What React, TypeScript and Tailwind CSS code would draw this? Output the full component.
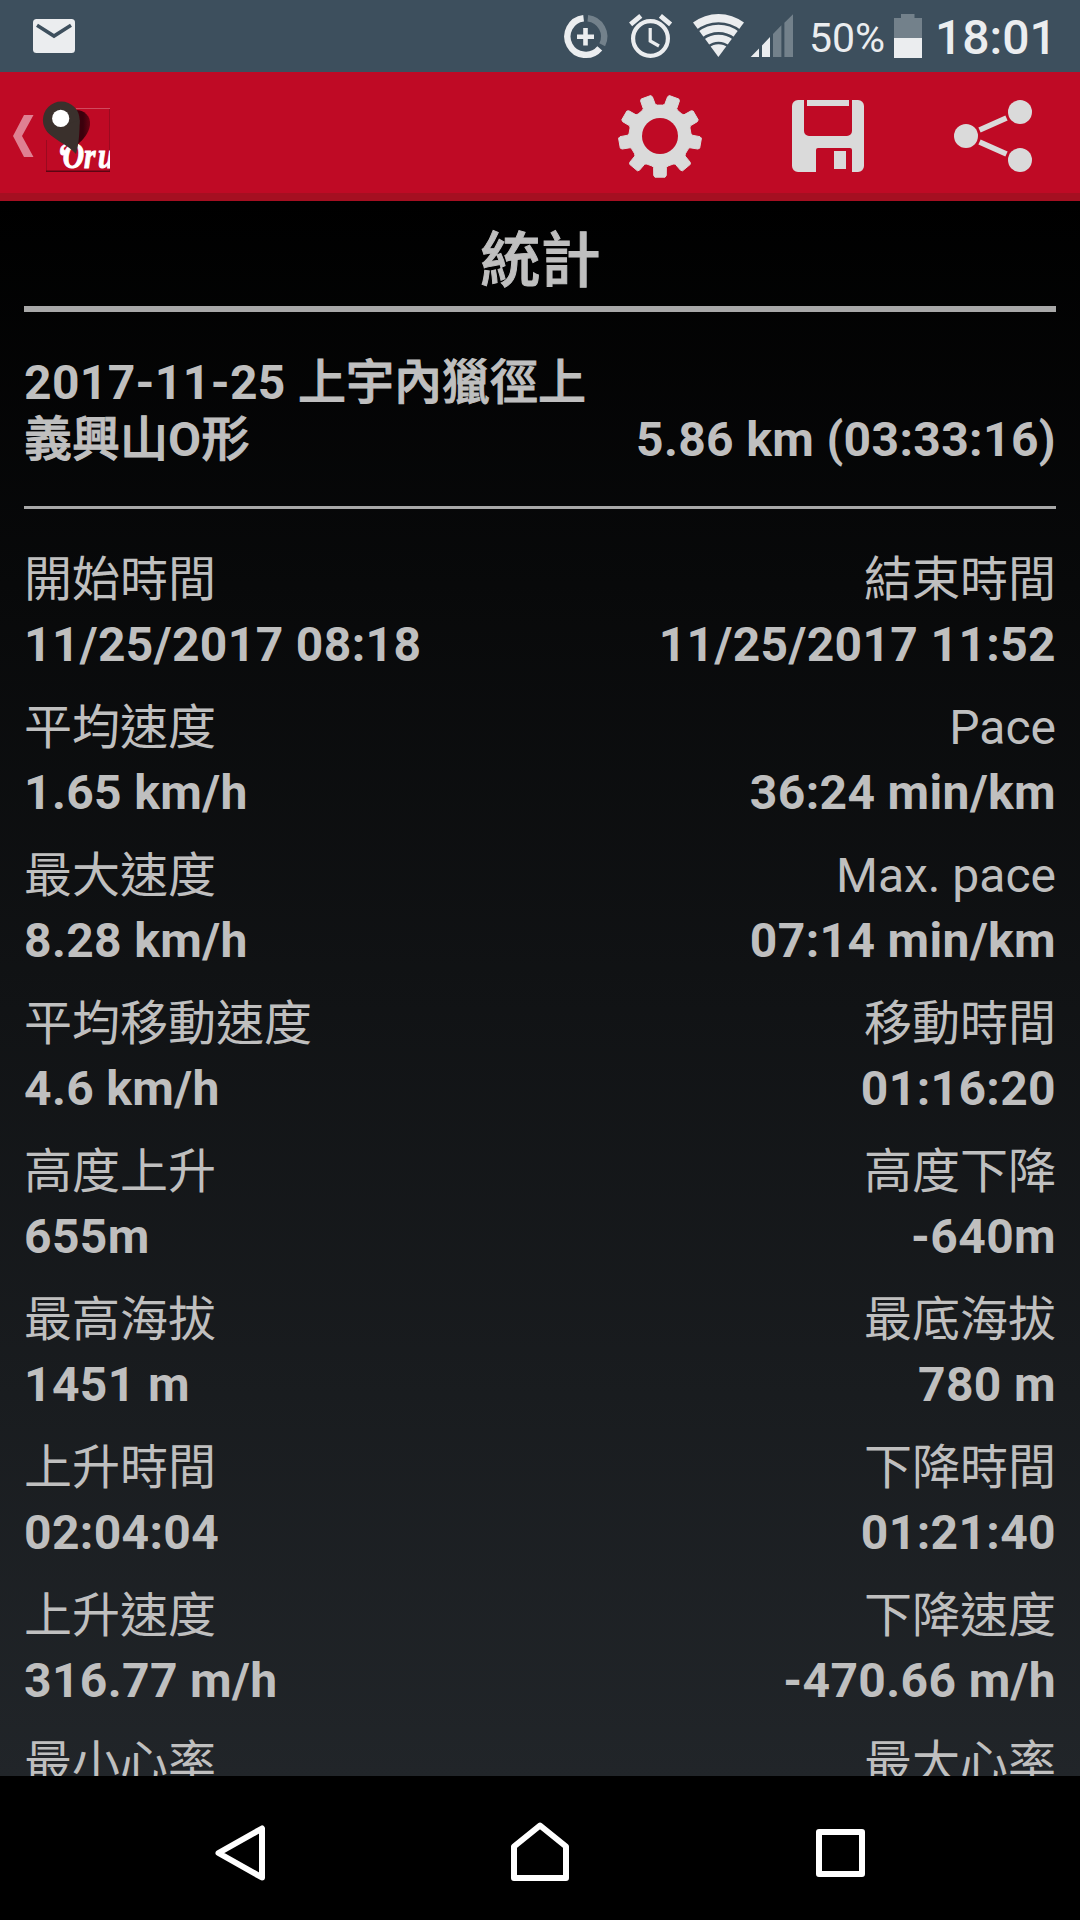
const summary = {
  date: "2017-11-25",
  name: ["上宇內獵徑上", "義興山", "形"],
  total: "5.86 km (03:33:16)",
};

const stats = [
  { left: ["開始時間", "11/25/2017 08:18"], right: ["結束時間", "11/25/2017 11:52"] },
  { left: ["平均速度", "1.65 km/h"], right: ["Pace", "36:24 min/km"] },
  { left: ["最大速度", "8.28 km/h"], right: ["Max. pace", "07:14 min/km"] },
  { left: ["平均移動速度", "4.6 km/h"], right: ["移動時間", "01:16:20"] },
  { left: ["高度上升", "655m"], right: ["高度下降", "-640m"] },
  { left: ["最高海拔", "1451 m"], right: ["最底海拔", "780 m"] },
  { left: ["上升時間", "02:04:04"], right: ["下降時間", "01:21:40"] },
  { left: ["上升速度", "316.77 m/h"], right: ["下降速度", "-470.66 m/h"] },
  { left: ["最小心率", ""], right: ["最大心率", ""] },
];

function MailIcon() {
  return (
    <svg width="42" height="34" viewBox="0 0 42 34" className="ml-[33px] shrink-0">
      <rect width="42" height="34" rx="3.5" fill="#ebedef" />
      <path d="M4 6.2 21 17l17-10.8" fill="none" stroke="#3d4f5d" strokeWidth="3.6" />
    </svg>
  );
}

/* Data saver, alarm, wifi and signal strength */
function StatusIcons() {
  return (
    <svg width="232" height="72" viewBox="563 0 232 72" className="shrink-0">
      <g fill="none" strokeWidth="6.4">
        <path d="M583.6 18.2a18.4 18.4 0 1 0 16.2 30.2" stroke="#ebedef" />
        <path d="M587.8 18.2a18.4 18.4 0 0 1 14.4 26.6" stroke="#73818b" />
        <path d="M585.5 28v17.4M577 36.7h17" stroke="#ebedef" strokeWidth="4.6" />
      </g>
      <g fill="none" stroke="#ebedef">
        <circle cx="650.5" cy="38.5" r="17.4" strokeWidth="4.2" />
        <path d="M650.2 28v13l8.8 5" strokeWidth="3.2" />
        <path d="M630.6 24.4l10.2-8.6M670.6 24.4l-10.2-8.6" strokeWidth="4.8" />
      </g>
      {/* wifi: a wedge cut into bands by three thin arcs */}
      <path d="M693 22.6a42.5 42.5 0 0 1 51 0L718.4 57z" fill="#ebedef" />
      <g fill="none" stroke="#3d4f5d" strokeWidth="2.6">
        <path d="M697 31a34.5 34.5 0 0 1 43 0" />
        <path d="M703 38.6a25.5 25.5 0 0 1 31 0" />
        <path d="M708.5 46.6a15.8 15.8 0 0 1 20 0" />
      </g>
      <path d="M750.7 57 759 48.4V57zM762 45.4l8-8.4v20h-8z" fill="#ebedef" />
      <path d="M773 34l8.4-8.8V57H773zM784.4 22.8l8.6-8.6V57h-8.6z" fill="#73818b" />
    </svg>
  );
}

function BatteryIcon() {
  return (
    <svg width="28" height="44" viewBox="0 0 28 44" className="ml-[9px] shrink-0">
      <path d="M7 0h13.5v4H28v20H0V4h7z" fill="#73818b" />
      <path d="M0 24h28v20H0z" fill="#ebedef" />
    </svg>
  );
}

function BackChevron() {
  return (
    <svg width="21" height="42" viewBox="0 0 21 42" className="ml-[13px] shrink-0">
      <path d="M11 0h9.5L9 21l11.5 21H11L0 21z" fill="#df8092" />
    </svg>
  );
}

function AppLogo() {
  return (
    <svg width="70" height="74" viewBox="42 99 70 74" className="ml-[8px] shrink-0">
      <defs>
        <clipPath id="tile">
          <rect x="46" y="108" width="64" height="64" />
        </clipPath>
        <linearGradient id="pinShadow" x1="0" x2="1">
          <stop offset="0.5" stopColor="#3c000c" />
          <stop offset="1" stopColor="#6a0313" />
        </linearGradient>
      </defs>
      <rect x="46" y="108" width="64" height="64" fill="#bf0a25" />
      <path d="M76 108.5h34" stroke="#d04a5e" strokeWidth="1" />
      <path d="M46.5 140v32M109.5 109v63" stroke="#9b0a20" strokeWidth="1" />
      <path d="M46 171.3h64" stroke="#5c0512" strokeWidth="1.5" />
      <path d="M76 110c8 0 15 6 14 15-1 8-7 15-12 19z" fill="url(#pinShadow)" />
      <g clipPath="url(#tile)">
        <text
          transform="translate(57 168) scale(0.82 1)"
          x="0 7 33 50"
          fill="white"
          stroke="white"
          strokeWidth="1"
          fontFamily="Liberation Serif, serif"
          fontSize="36"
          fontStyle="italic"
          fontWeight="700"
        >
          ‘Oru
        </text>
      </g>
      <circle cx="61.3" cy="120" r="18.4" fill="#3a302c" />
      <path d="M46.4 130.8C54 140 68 145 76 154c3-9 3.700-24 3.700-34z" fill="#3a302c" />
      <circle cx="60.7" cy="118.4" r="8.6" fill="white" />
    </svg>
  );
}

const TEETH = 9;

/* Nine-tooth cog with one tooth pointing straight down */
function GearIcon() {
  const at = (deg: number, r: number) => {
    const a = (deg * Math.PI) / 180;
    return `${(42 + r * Math.cos(a)).toFixed(2)},${(42 + r * Math.sin(a)).toFixed(2)}`;
  };
  const points = Array.from({ length: TEETH }, (_, i) => {
    const c = 90 + (i * 360) / TEETH;
    return [at(c - 15, 31), at(c - 11.5, 32), at(c - 9, 40), at(c - 7, 41.5), at(c + 7, 41.5), at(c + 9, 40), at(c + 11.5, 32), at(c + 15, 31)].join(" ");
  }).join(" ");
  return (
    <svg width="84" height="84" viewBox="0 0 84 84" className="shrink-0">
      <polygon points={points} fill="#dadada" stroke="#dadada" strokeWidth="1" strokeLinejoin="round" />
      <circle cx="42" cy="42" r="18" fill="#bf0a25" />
    </svg>
  );
}

function SaveIcon() {
  return (
    <svg width="72" height="72" viewBox="0 0 72 72" className="ml-[90px] shrink-0">
      <path
        d="M6 0h6v31a5 5 0 0 0 5 5h38a5 5 0 0 0 5-5V0h6a6 6 0 0 1 6 6v60a6 6 0 0 1-6 6h-6V50a2 2 0 0 0-2-2H26a2 2 0 0 0-2 2v22H6a6 6 0 0 1-6-6V6a6 6 0 0 1 6-6z"
        fill="#dadada"
      />
      <path d="M15 0h42v6H15zM42 51h12v18H42z" fill="#dadada" />
    </svg>
  );
}

function ShareIcon() {
  return (
    <svg width="78" height="72" viewBox="0 0 78 72" className="mr-[48px] ml-[90px] shrink-0">
      <g fill="#dadada">
        <circle cx="12" cy="36" r="12" />
        <circle cx="66" cy="12" r="12" />
        <circle cx="66" cy="60" r="12" />
      </g>
      <path d="M25.5 30 52.5 18M25.5 42l27 12" stroke="#dadada" strokeWidth="5.6" />
    </svg>
  );
}

/* Medium weight thickened by a hairline, a touch lighter than the bold cut */
function Han({ children }: { children: string }) {
  return <span className="font-medium tracking-normal [-webkit-text-stroke:1px_#bfbfbf]">{children}</span>;
}

function StatCell({ item, end }: { item: string[]; end?: boolean }) {
  return (
    <div className={end ? "text-right" : "text-left"}>
      <div className="h-[65px] leading-[65px]">{item[0]}</div>
      <div className="h-[65px] leading-[65px] font-bold tracking-[0.36px]">{item[1]}</div>
    </div>
  );
}

export default function App() {
  return (
    <div className="flex h-[1920px] w-[1080px] flex-col overflow-hidden bg-black font-[Roboto,'Noto_Sans_CJK_TC',sans-serif] text-[#bfbfbf]">
      {/* Status bar */}
      <div className="flex h-[72px] shrink-0 items-center bg-[#3d4f5d] text-[#ebedef]">
        <MailIcon />
        <div className="ml-auto flex items-center pr-[29px]">
          <StatusIcons />
          <span className="ml-[14px] w-[76px] pt-[3px] text-[41px] leading-[72px] whitespace-nowrap">50%</span>
          <BatteryIcon />
          <span className="ml-[13px] w-[116px] pt-[3px] text-[48px] leading-[70px] font-medium whitespace-nowrap">18:01</span>
        </div>
      </div>

      {/* Action bar */}
      <div className="flex h-[129px] shrink-0 items-center border-b-8 border-[#a50f21] bg-[#bf0a25] pt-[7px]">
        <BackChevron />
        <AppLogo />
        <div className="ml-auto flex items-center">
          <GearIcon />
          <SaveIcon />
          <ShareIcon />
        </div>
      </div>

      {/* Statistics */}
      <main className="h-[1575px] shrink-0 overflow-hidden bg-linear-to-b/srgb from-black to-[#212529] px-6 text-[48px]">
        <h1 className="h-[111px] border-b-6 border-[#a8a8a8] pl-px text-center text-[60px] leading-[121px]">
          <Han>統計</Han>
        </h1>
        <div className="flex h-[197px] items-end justify-between border-b-3 border-[#a8a8a8] pb-[38px] leading-[57px] font-bold tracking-[0.36px]">
          <div className="whitespace-nowrap">
            <div className="h-[57px]">
              {summary.date} <Han>{summary.name[0]}</Han>
            </div>
            <div className="h-[57px]">
              <Han>{summary.name[1]}</Han>O<Han>{summary.name[2]}</Han>
            </div>
          </div>
          <div className="h-[57px]">{summary.total}</div>
        </div>
        <div className="pt-[38px]">
          {stats.map((row) => (
            <div key={row.left[0]} className="flex h-[148px] justify-between">
              <StatCell item={row.left} />
              <StatCell item={row.right} end />
            </div>
          ))}
        </div>
      </main>

      {/* Navigation bar */}
      <nav className="flex h-[144px] shrink-0 items-center bg-black">
        <svg width="1080" height="144" viewBox="0 1776 1080 144" fill="none" stroke="white" strokeWidth="6" strokeLinejoin="round">
          <path d="M262 1828.5v49L218.5 1853z" />
          <path d="M514 1878v-31.5l26-21 26 21V1878z" />
          <rect x="819" y="1832" width="43" height="42" />
        </svg>
      </nav>
    </div>
  );
}
